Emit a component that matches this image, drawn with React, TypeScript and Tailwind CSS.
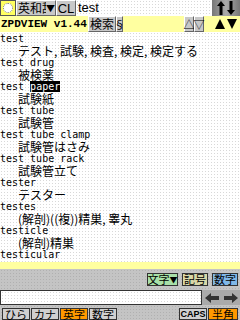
import React from "react"

const mono = { fontFamily: '"DejaVu Sans Mono", "Liberation Mono", monospace' }
const jp = { fontFamily: '"Noto Sans CJK JP", sans-serif' }
const sans = { fontFamily: '"Liberation Sans", sans-serif' }

const entries: { head: React.ReactNode; body: string }[] = [
  { head: "test", body: "テスト, 試験, 検査, 検定, 検定する" },
  { head: "test drug", body: "被検薬" },
  { head: <>test <span className="bg-black text-white">paper</span></>, body: "試験紙" },
  { head: "test tube", body: "試験管" },
  { head: "test tube clamp", body: "試験管はさみ" },
  { head: "test tube rack", body: "試験管立て" },
  { head: "tester", body: "テスター" },
  { head: "testes", body: "(解剖)((複))精巣, 睾丸" },
  { head: "testicle", body: "(解剖)精巣" },
  { head: "testicular", body: "" },
]

const dots = "bg-[radial-gradient(#d8d8d8_1px,transparent_1px)] bg-[length:3px_3px]"
const grayDots = "bg-[#c4c4c4] bg-[radial-gradient(#b0b0b0_1px,transparent_1px)] bg-[length:3px_3px]"

function Btn({ children, className }: { children: React.ReactNode; className?: string }) {
  return (
    <div className={"flex items-center justify-center whitespace-nowrap border border-t-white border-l-white border-b-[#666] border-r-[#666] text-[11px] leading-none text-black " + (className ?? "")} style={jp}>
      {children}
    </div>
  )
}

function Arrow({ dir }: { dir: "l" | "r" }) {
  return (
    <svg width="14" height="10" viewBox="0 0 14 10">
      <path d={dir === "l" ? "M0 5 L6 0 L6 3 L14 3 L14 7 L6 7 L6 10 Z" : "M14 5 L8 0 L8 3 L0 3 L0 7 L8 7 L8 10 Z"} fill="#333" />
    </svg>
  )
}

export default function App() {
  return (
    <div className="w-[240px] h-[320px] overflow-hidden flex flex-col bg-white">
      {/* top row */}
      <div className={"h-[16px] flex " + grayDots}>
        <div className="w-[16px] h-[16px] bg-[#ffff60] border border-[#555] flex items-center justify-center">
          <div className="w-[10px] h-[10px] rounded-full bg-white border border-dotted border-[#777]" />
        </div>
        <Btn className="w-[40px] bg-[#c8c8c8] !justify-start pl-[1px] text-[12px]">
          <span className="inline-block w-[29px] overflow-hidden whitespace-nowrap">英和辞</span>
          <span className="text-[9px]">▼</span>
        </Btn>
        <Btn className="w-[20px] bg-[#c8c8c8]"><span style={sans} className="text-[13px]">CL</span></Btn>
        <div className={"w-[136px] h-[16px] bg-white pl-[2px] flex items-center text-[13px] text-black " + dots} style={sans}>test</div>
        <div className="w-[28px] h-[16px] bg-[linear-gradient(90deg,#777,#aaa,#777)] flex items-center justify-center">
          <svg width="20" height="14" viewBox="0 0 20 14">
            <path d="M5 0 L9 5 L6.5 5 L6.5 14 L3.5 14 L3.5 5 L1 5 Z" fill="#000" />
            <path d="M15 14 L19 9 L16.5 9 L16.5 0 L13.5 0 L13.5 9 L11 9 Z" fill="#000" />
          </svg>
        </div>
      </div>
      {/* title row */}
      <div className="h-[16px] flex bg-[#ffffa0] items-center">
        <div className="w-[88px] text-[11px] font-bold pl-[1px] text-black whitespace-nowrap" style={{ fontFamily: '"Liberation Mono", monospace' }}>ZPDVIEW v1.44</div>
        <Btn className="w-[28px] h-[16px] bg-[#c8c8c8] text-[12px]">検索</Btn>
        <Btn className="w-[7px] h-[16px] bg-[#c8c8c8] text-[9px]">§</Btn>
        <div className="flex-1" />
        <Btn className="w-[10px] h-[16px] bg-[#c8c8c8] text-[9px]">△</Btn>
        <Btn className="w-[10px] h-[16px] bg-[#c8c8c8] text-[9px]">▽</Btn>
        <div className="w-[8px]" />
        <div className="w-[28px] flex items-center justify-center">
          <svg width="24" height="10" viewBox="0 0 24 10">
            <path d="M1 10 L6 0 L11 10 Z" fill="#000" />
            <path d="M13 0 L23 0 L18 10 Z" fill="#000" />
          </svg>
        </div>
      </div>
      {/* content */}
      <div className={"flex-1 pt-[1px] " + dots}>
        {entries.map((e, i) => (
          <div key={i}>
            <div className="h-[12px] text-[10px] leading-[12px] text-black whitespace-nowrap" style={mono}>{e.head}</div>
            {e.body && (
              <div className="h-[12px] pl-[18px] text-[12px] leading-[12px] text-black whitespace-nowrap" style={jp}>{e.body}</div>
            )}
          </div>
        ))}
      </div>
      {/* bottom */}
      <div className="h-[7px] bg-[#ffffa0]" />
      <div className={"h-[51px] flex flex-col " + grayDots}>
        <div className="h-[21px] flex items-center justify-end gap-[4px] pr-[2px]">
          <Btn className="w-[31px] h-[13px] bg-[#a8e0a8] !border-[#333]">文字<span className="text-[8px]">▼</span></Btn>
          <Btn className="w-[26px] h-[13px] bg-[#d8d8a8] !border-[#333]">記号</Btn>
          <Btn className="w-[26px] h-[13px] bg-[#80b8e8] !border-[#333]">数字</Btn>
        </div>
        <div className="h-[15px] flex">
          <div className={"w-[202px] bg-white border border-[#333] " + dots} />
          <div className="flex-1 bg-[#aaa] flex items-center justify-around">
            <Arrow dir="l" />
            <Arrow dir="r" />
          </div>
        </div>
        <div className="h-[15px] flex items-end gap-[1px] pl-[2px]">
          <Btn className="w-[28px] h-[12px] bg-[#d0d0d0] !border-[#333]">ひら</Btn>
          <Btn className="w-[28px] h-[12px] bg-[#d0d0d0] !border-[#333]">カナ</Btn>
          <Btn className="w-[28px] h-[12px] bg-[#ff9900] !border-[#333]">英字</Btn>
          <Btn className="w-[28px] h-[12px] bg-[#d0d0d0] !border-[#333]">数字</Btn>
          <div className="flex-1" />
          <Btn className="w-[28px] h-[12px] bg-[#d0d0d0] !border-[#333]"><span style={{ fontFamily: '"Liberation Sans Narrow", "Liberation Sans", sans-serif' }} className="text-[9px] font-bold">CAPS</span></Btn>
          <Btn className="w-[30px] h-[12px] bg-[#ff9900] !border-[#333] mr-[2px]">半角</Btn>
        </div>
      </div>
    </div>
  )
}
